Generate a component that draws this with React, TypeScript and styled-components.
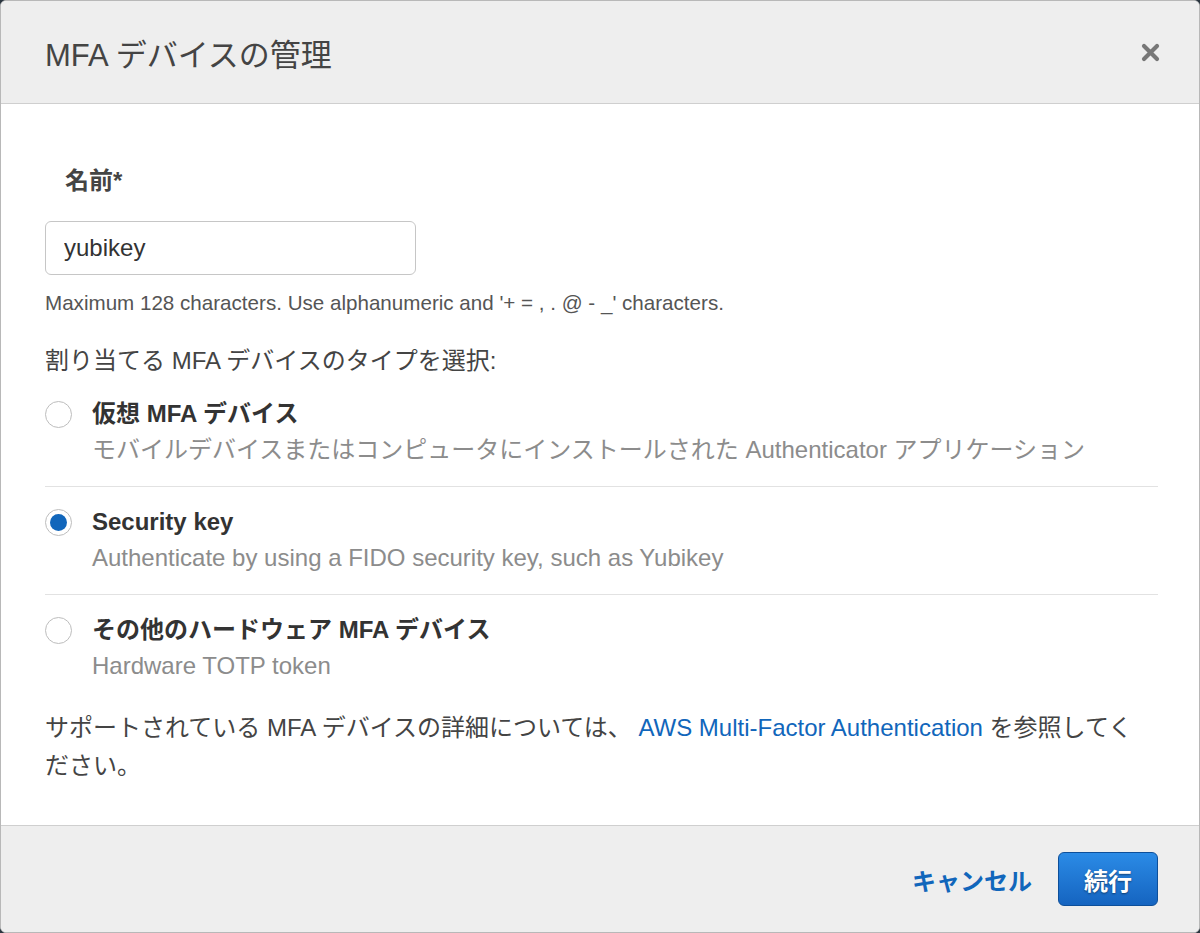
import React, { useState } from "react";
import styled, { createGlobalStyle } from "styled-components";

const Global = createGlobalStyle`
  html, body { margin: 0; padding: 0; background: #2b3640; }
  body { font-family: "Liberation Sans", Arial, "Noto Sans CJK JP", sans-serif; }
  * { box-sizing: border-box; }
`;

const Dialog = styled.div`
  width: 1200px;
  height: 933px;
  display: flex;
  flex-direction: column;
  background: #fff;
  border: 1px solid #b8b8b8;
  border-radius: 6px;
  overflow: hidden;
`;

const Header = styled.div`
  height: 103px;
  flex: none;
  display: flex;
  align-items: center;
  justify-content: space-between;
  padding: 0 38px 0 44px;
  background: #eeeeee;
  border-bottom: 1px solid #cfcfcf;
`;

const Title = styled.h1`
  margin: 0;
  font-size: 31px;
  font-weight: 400;
  color: #444;
`;

const Close = styled.button`
  border: 0;
  background: none;
  padding: 0;
  width: 22px;
  height: 22px;
  display: flex;
  align-items: center;
  justify-content: center;
  cursor: pointer;
`;

const Body = styled.div`
  flex: 1;
  padding: 62px 41px 0 44px;
  color: #444;
`;

const FieldLabel = styled.div`
  font-size: 24px;
  font-weight: 700;
  line-height: 30px;
  padding-left: 20px;
  margin-bottom: 25px;
  color: #444;
`;

const TextInput = styled.input`
  display: block;
  width: 371px;
  height: 54px;
  border: 1px solid #c6c6c6;
  border-radius: 6px;
  padding: 0 18px;
  font-family: inherit;
  font-size: 24px;
  color: #333;
  outline: none;
  margin-bottom: 15px;
`;

const Help = styled.div`
  font-size: 20.6px;
  line-height: 26px;
  color: #555;
`;

const Prompt = styled.div`
  font-size: 24px;
  line-height: 30px;
  margin-top: 30px;
  margin-bottom: 3px;
  color: #444;
`;

const Option = styled.label<{ $last?: boolean }>`
  display: grid;
  grid-template-columns: 47px 1fr;
  padding: 17px 0 ${(p) => (p.$last ? "0" : "18px")};
  border-bottom: ${(p) => (p.$last ? "none" : "1px solid #e2e2e2")};
  cursor: pointer;
`;

const RadioCol = styled.div`
  height: 36px;
  display: flex;
  align-items: center;
`;

const Radio = styled.span<{ $checked: boolean }>`
  width: 27px;
  height: 27px;
  border-radius: 50%;
  border: 1px solid #bdbdbd;
  background: #fff;
  display: flex;
  align-items: center;
  justify-content: center;
  &::after {
    content: "";
    width: 17px;
    height: 17px;
    border-radius: 50%;
    background: ${(p) => (p.$checked ? "#1166bb" : "transparent")};
  }
`;

const OptTitle = styled.div`
  font-size: 24px;
  font-weight: 700;
  line-height: 36px;
  color: #333;
`;

const OptDesc = styled.div`
  font-size: 24px;
  line-height: 36px;
  color: #8c8c8c;
`;

const Paragraph = styled.p`
  margin: 25px 0 0;
  padding-right: 8px;
  font-size: 24px;
  line-height: 38px;
  color: #444;
`;

const Link = styled.a`
  color: #1166bb;
  text-decoration: none;
`;

const Footer = styled.div`
  height: 107px;
  flex: none;
  display: flex;
  align-items: center;
  justify-content: flex-end;
  gap: 26px;
  padding: 0 41px 0 0;
  background: #eeeeee;
  border-top: 1px solid #cfcfcf;
`;

const TextButton = styled.button`
  border: 0;
  background: none;
  padding: 0;
  font-family: inherit;
  font-size: 24px;
  font-weight: 700;
  color: #1166bb;
  cursor: pointer;
`;

const PrimaryButton = styled.button`
  width: 100px;
  height: 54px;
  border: 1px solid #0d4f9a;
  border-radius: 6px;
  background: linear-gradient(#2b8be6, #1564c0);
  color: #fff;
  font-family: inherit;
  font-size: 24px;
  font-weight: 700;
  text-shadow: 0 1px 2px rgba(0, 0, 0, 0.45);
  cursor: pointer;
`;

const options = [
  {
    id: "virtual",
    title: "仮想 MFA デバイス",
    desc: "モバイルデバイスまたはコンピュータにインストールされた Authenticator アプリケーション",
  },
  {
    id: "key",
    title: "Security key",
    desc: "Authenticate by using a FIDO security key, such as Yubikey",
  },
  {
    id: "hardware",
    title: "その他のハードウェア MFA デバイス",
    desc: "Hardware TOTP token",
  },
];

export default function App() {
  const [selected, setSelected] = useState("key");
  return (
    <>
      <Global />
      <Dialog>
        <Header>
          <Title>MFA デバイスの管理</Title>
          <Close aria-label="close">
            <svg width="19" height="19" viewBox="0 0 19 19">
              <path d="M3 3 L16 16 M16 3 L3 16" stroke="#777" strokeWidth="4.2" strokeLinecap="round" />
            </svg>
          </Close>
        </Header>
        <Body>
          <FieldLabel>名前*</FieldLabel>
          <TextInput defaultValue="yubikey" />
          <Help>Maximum 128 characters. Use alphanumeric and '+ = , . @ - _' characters.</Help>
          <Prompt>割り当てる MFA デバイスのタイプを選択:</Prompt>
          {options.map((o, i) => (
            <Option key={o.id} $last={i === options.length - 1} onClick={() => setSelected(o.id)}>
              <RadioCol>
                <Radio $checked={selected === o.id} />
              </RadioCol>
              <div>
                <OptTitle>{o.title}</OptTitle>
                <OptDesc>{o.desc}</OptDesc>
              </div>
            </Option>
          ))}
          <Paragraph>
            サポートされている MFA デバイスの詳細については、 <Link href="#">AWS Multi-Factor Authentication</Link> を参照してください。
          </Paragraph>
        </Body>
        <Footer>
          <TextButton>キャンセル</TextButton>
          <PrimaryButton>続行</PrimaryButton>
        </Footer>
      </Dialog>
    </>
  );
}
